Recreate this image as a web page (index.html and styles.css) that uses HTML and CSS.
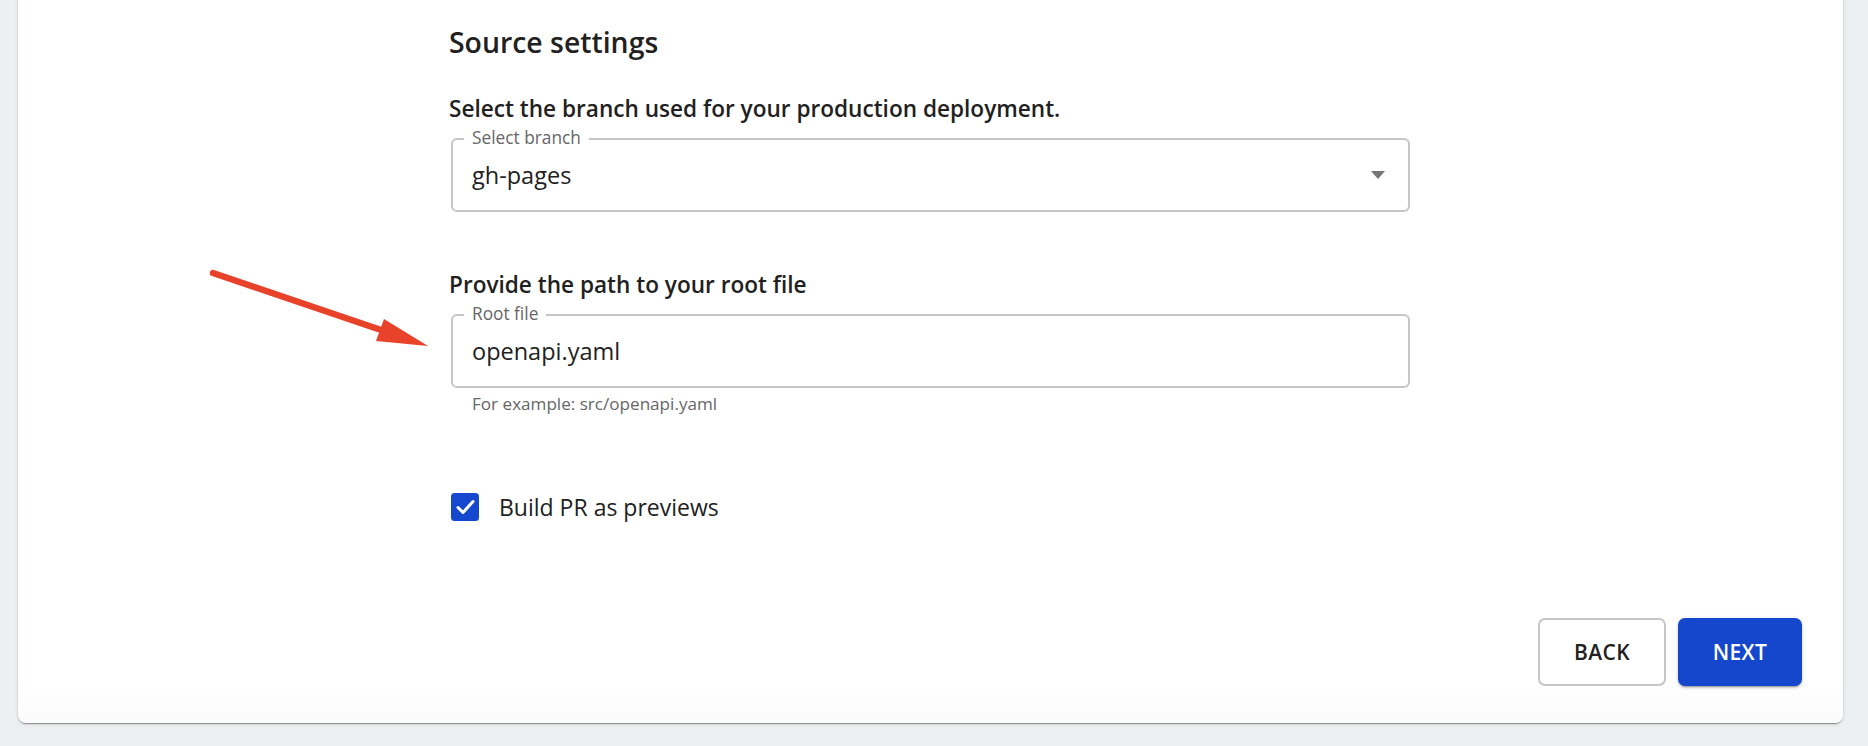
FILE: index.html
```html
<!DOCTYPE html>
<html lang="en">
<head>
<meta charset="utf-8">
<title>Source settings</title>
<link rel="stylesheet" href="styles.css">
</head>
<body>
<div class="card">
  <div class="content">
    <h1 class="title">Source settings</h1>
    <h2 class="section-title">Select the branch used for your production deployment.</h2>
    <div class="field">
      <span class="field-label">Select branch</span>
      <span class="field-value">gh-pages</span>
      <svg class="dropdown-icon" viewBox="0 0 14 8" aria-hidden="true"><polygon points="0,0 14,0 7,8" fill="#757575"/></svg>
    </div>
    <h2 class="section-title section-gap">Provide the path to your root file</h2>
    <div class="field">
      <span class="field-label">Root file</span>
      <span class="field-value">openapi.yaml</span>
    </div>
    <p class="helper">For example: src/openapi.yaml</p>
    <label class="checkbox-row">
      <svg class="checkbox" viewBox="0 0 28 28" aria-hidden="true">
        <rect x="0" y="0" width="28" height="28" rx="3.5" fill="#1648cf"/>
        <polyline points="7,14.5 12,19.5 22,8.5" fill="none" stroke="#fff" stroke-width="3" stroke-linecap="round" stroke-linejoin="round"/>
      </svg>
      <span>Build PR as previews</span>
    </label>
  </div>
  <div class="actions">
    <button class="btn btn-outline">BACK</button>
    <button class="btn btn-primary">NEXT</button>
  </div>
</div>
<svg class="annotation-arrow" viewBox="0 0 1868 746" aria-hidden="true">
  <line x1="213" y1="273" x2="384" y2="331" stroke="#e8432a" stroke-width="6.5" stroke-linecap="round"/>
  <polygon points="428,346 384,319 376,341" fill="#e8432a"/>
</svg>
</body>
</html>
```
FILE: styles.css
```css
html, body {
  margin: 0;
  padding: 0;
}

body {
  position: relative;
  width: 1868px;
  height: 746px;
  overflow: hidden;
  background: #edf0f1;
  font-family: "Open Sans", "Noto Sans", sans-serif;
  color: #212121;
}

.card {
  margin: -10px 0 0 18px;
  width: 1825px;
  height: 733px;
  box-sizing: border-box;
  padding-top: 10px;
  background: linear-gradient(#ffffff calc(100% - 40px), #fbfbfb);
  border-radius: 8px;
  box-shadow: 0 2px 1px -1px rgba(0, 0, 0, 0.28), 0 1px 2px rgba(0, 0, 0, 0.18), 0 1px 5px rgba(0, 0, 0, 0.08);
  display: flex;
  flex-direction: column;
}

.content {
  width: 959px;
  margin: 0 auto;
}

.title {
  margin: 0 0 0 -2px;
  padding-top: 24px;
  font-size: 28.4px;
  line-height: 36px;
  font-weight: 600;
}

.section-title {
  margin: 34px 0 0 -2px;
  font-size: 22.6px;
  line-height: 30px;
  font-weight: 600;
}

.section-gap {
  margin-top: 58px;
}

.field {
  position: relative;
  margin-top: 14px;
  height: 74px;
  box-sizing: border-box;
  border: 2px solid #c6c6c6;
  border-radius: 6px;
  display: flex;
  align-items: center;
  padding: 0 23px 0 19px;
}

.field-label {
  position: absolute;
  top: -13px;
  left: 11px;
  padding: 0 8px;
  background: #fff;
  font-size: 17.3px;
  line-height: 22px;
  color: #666;
}

.field-value {
  flex: 1;
  font-size: 23.5px;
  line-height: 30px;
}

.dropdown-icon {
  width: 14px;
  height: 8px;
  display: block;
}

.helper {
  margin: 5px 0 0;
  padding-left: 21px;
  font-size: 17.1px;
  line-height: 22px;
  color: #666;
}

.checkbox-row {
  display: flex;
  align-items: center;
  gap: 20px;
  margin-top: 77px;
  font-size: 23px;
  line-height: 30px;
}

.checkbox {
  width: 28px;
  height: 28px;
  display: block;
}

.actions {
  margin-top: auto;
  display: flex;
  justify-content: flex-end;
  gap: 12px;
  padding: 0 41px 37px 0;
}

.btn {
  height: 68px;
  box-sizing: border-box;
  border-radius: 7px;
  font-family: "Open Sans", "Noto Sans", sans-serif;
  font-size: 21px;
  font-weight: 600;
  letter-spacing: 0.4px;
  cursor: pointer;
}

.btn-outline {
  width: 128px;
  border: 2px solid #c6c6c6;
  background: #fff;
  color: #212121;
}

.btn-primary {
  width: 124px;
  border: none;
  background: #1547cc;
  color: #fff;
  box-shadow: 0 3px 1px -2px rgba(0, 0, 0, 0.2), 0 2px 2px rgba(0, 0, 0, 0.14), 0 1px 5px rgba(0, 0, 0, 0.12);
}

.annotation-arrow {
  position: absolute;
  left: 0;
  top: 0;
  width: 1868px;
  height: 746px;
  pointer-events: none;
}
```
